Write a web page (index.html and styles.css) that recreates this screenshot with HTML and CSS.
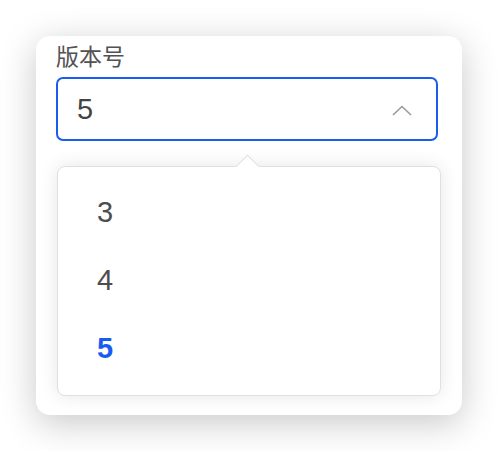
FILE: index.html
```html
<!DOCTYPE html>
<html lang="zh-CN">
<head>
    <meta charset="UTF-8">
    <meta name="viewport" content="width=device-width, initial-scale=1.0">
    <title>版本号</title>
    <link rel="stylesheet" href="styles.css">
</head>
<body>
    <div class="card">
        <label class="field-label" for="version">版本号</label>
        <div class="select is-open" id="version">
            <span class="select-value">5</span>
            <svg class="select-arrow" width="20" height="11" viewBox="0 0 20 11">
                <polyline points="1,10 10,1.5 19,10" fill="none" stroke="#9a9a9a" stroke-width="1.6"/>
            </svg>
        </div>
        <ul class="dropdown">
            <li class="option">3</li>
            <li class="option">4</li>
            <li class="option selected">5</li>
        </ul>
    </div>
</body>
</html>
```

FILE: styles.css
```css
* {
    margin: 0;
    padding: 0;
    box-sizing: border-box;
}

body {
    background: #fff;
    padding: 36px;
    font-family: 'Liberation Sans', 'Noto Sans CJK SC', sans-serif;
}

.card {
    width: 426px;
    padding: 6px 24px 19px 20px;
    background: #fff;
    border-radius: 14px;
    box-shadow: 0 8px 36px rgba(0, 0, 0, 0.22);
}

.field-label {
    display: block;
    font-size: 23px;
    line-height: 30px;
    color: #525252;
}

.select {
    margin-top: 5px;
    height: 64px;
    display: flex;
    align-items: center;
    justify-content: space-between;
    padding: 0 24px 0 19px;
    border: 2px solid #1b5cf0;
    border-radius: 7px;
}

.select-value {
    font-size: 29px;
    color: #444;
}

.select-arrow {
    margin-top: 2px;
}

.dropdown {
    position: relative;
    list-style: none;
    width: 384px;
    margin: 25px 0 0 1px;
    padding: 11px 0 13px;
    background: #fff;
    border: 1px solid #dce0e8;
    border-radius: 8px;
    box-shadow: 0 0 18px rgba(0, 0, 0, 0.1);
}

/* little pointer towards the input */
.dropdown::before {
    content: '';
    position: absolute;
    top: -9px;
    left: 181px;
    width: 16px;
    height: 16px;
    background: #fff;
    border-left: 1px solid #dce0e8;
    border-top: 1px solid #dce0e8;
    transform: rotate(45deg);
}

.option {
    height: 68px;
    line-height: 68px;
    padding-left: 39px;
    font-size: 29px;
    color: #4d4d4d;
}

.option.selected {
    color: #1b5cf0;
    font-weight: 700;
}
```
